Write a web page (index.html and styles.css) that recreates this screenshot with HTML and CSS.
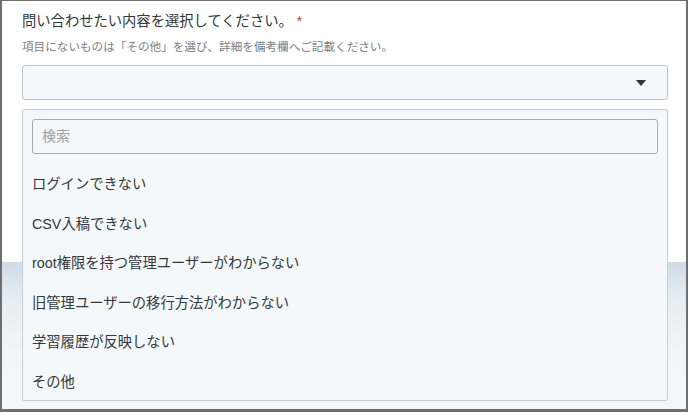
FILE: index.html
```html
<!DOCTYPE html>
<html lang="ja">
<head>
<meta charset="utf-8">
<link rel="stylesheet" href="styles.css">
</head>
<body>
<div class="frame">
  <div class="label">問い合わせたい内容を選択してください。<span class="req">*</span></div>
  <div class="help">項目にないものは「その他」を選び、詳細を備考欄へご記載ください。</div>
  <div class="select">
    <svg class="arrow" width="10" height="6" viewBox="0 0 10 6"><path d="M0 0H10L5 6Z" fill="#2f3338"/></svg>
  </div>
  <div class="panel">
    <div class="search">検索</div>
    <ul class="options">
      <li>ログインできない</li>
      <li>CSV入稿できない</li>
      <li>root権限を持つ管理ユーザーがわからない</li>
      <li>旧管理ユーザーの移行方法がわからない</li>
      <li>学習履歴が反映しない</li>
      <li>その他</li>
    </ul>
  </div>
</div>
</body>
</html>
```
FILE: styles.css
```css
html, body {
  margin: 0;
  padding: 0;
}
body {
  width: 688px;
  height: 412px;
  overflow: hidden;
  font-family: "Liberation Sans", "Noto Sans CJK JP", sans-serif;
  color: #33383d;
}
.frame {
  box-sizing: border-box;
  width: 688px;
  height: 412px;
  border: 2px solid #6e6e6e;
  border-top-width: 1px;
  border-bottom-width: 3px;
  padding: 10px 18px 0 20px;
  display: flex;
  flex-direction: column;
  background: linear-gradient(to bottom, #ffffff 0, #ffffff 261px, #cfdce6 261px, #e6eef3 300px, #f2f6f8 360px, #f4f7f9 100%);
}
.label {
  font-size: 14.3px;
  line-height: 20px;
  height: 20px;
  color: #33383d;
}
.req {
  color: #e0322c;
  margin-left: 4px;
  font-size: 14px;
}
.help {
  margin-top: 8px;
  font-size: 11.6px;
  line-height: 16px;
  color: #7b8189;
}
.select {
  margin-top: 10px;
  box-sizing: border-box;
  height: 35px;
  background: #f5f8fa;
  border: 1px solid #bfc4c9;
  border-radius: 3px;
  display: flex;
  align-items: center;
  justify-content: flex-end;
  padding-right: 21px;
}
.arrow {
  display: block;
}
.panel {
  margin-top: 9px;
  box-sizing: border-box;
  height: 292px;
  background: #f5f8fa;
  border: 1px solid #c8cdd2;
  border-radius: 2px;
  padding: 9px 9px 0 9px;
}
.search {
  box-sizing: border-box;
  height: 35px;
  border: 1px solid #a5abb1;
  border-radius: 3px;
  background: #f5f8fa;
  padding-left: 9px;
  font-size: 14px;
  line-height: 33px;
  color: #9aa1a8;
}
.options {
  list-style: none;
  margin: 11px 0 0 0;
  padding: 0;
}
.options li {
  height: 39.5px;
  line-height: 39.5px;
  font-size: 14.3px;
  color: #33383d;
}
```
